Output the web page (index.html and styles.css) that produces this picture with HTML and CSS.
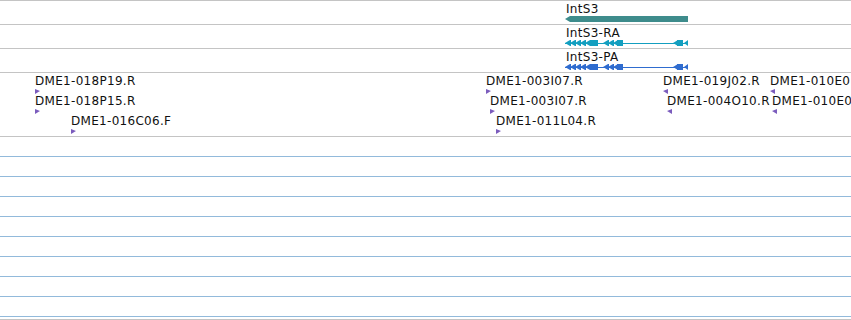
FILE: index.html
```html
<!DOCTYPE html>
<html lang="en">
<head>
	<meta charset="utf-8" />
	<title>Track view</title>
	<link rel="stylesheet" href="styles.css">
</head>
<body>
<div class="view">

	<!-- gene -->
	<div class="track">
		<div class="feature" style="left:565px">
			<div class="label">IntS3</div>
			<svg class="glyph" width="124" height="6">
				<polygon class="gene" points="0,3 5,0 123,0 123,6 5,6" />
			</svg>
		</div>
	</div>

	<!-- transcript RA -->
	<div class="track">
		<div class="feature" style="left:565px">
			<div class="label">IntS3-RA</div>
			<svg class="glyph ra" width="124" height="6">
				<rect x="0" y="2" width="123" height="2" />
				<polygon points="0,3 5,0 6,0 6,6 5,6" />
				<polygon points="5,3 10,0 11,0 11,6 10,6" />
				<polygon points="10,3 15,0 16,0 16,6 15,6" />
				<polygon points="15,3 20,0 21,0 21,6 20,6" />
				<polygon points="20,3 25,0 25,6" />
				<rect x="25" y="0" width="8" height="6" />
				<polygon points="38,3 43,0 44,0 44,6 43,6" />
				<polygon points="43,3 48,0 49,0 49,6 48,6" />
				<polygon points="48,3 53,0 53,6" />
				<rect x="52" y="0" width="6" height="6" />
				<polygon points="108,3 113,0 113,6" />
				<rect x="112" y="0" width="6" height="6" />
				<polygon points="119,3 123,0 123,6" />
			</svg>
		</div>
	</div>

	<!-- transcript PA -->
	<div class="track">
		<div class="feature" style="left:565px">
			<div class="label">IntS3-PA</div>
			<svg class="glyph pa" width="124" height="6">
				<rect x="0" y="2" width="123" height="2" />
				<polygon points="0,3 5,0 6,0 6,6 5,6" />
				<polygon points="5,3 10,0 11,0 11,6 10,6" />
				<polygon points="10,3 15,0 16,0 16,6 15,6" />
				<polygon points="15,3 20,0 21,0 21,6 20,6" />
				<polygon points="20,3 25,0 25,6" />
				<rect x="25" y="0" width="8" height="6" />
				<polygon points="38,3 43,0 44,0 44,6 43,6" />
				<polygon points="43,3 48,0 49,0 49,6 48,6" />
				<polygon points="48,3 53,0 53,6" />
				<rect x="52" y="0" width="6" height="6" />
				<polygon points="108,3 113,0 113,6" />
				<rect x="112" y="0" width="6" height="6" />
				<polygon points="119,3 123,0 123,6" />
			</svg>
		</div>
	</div>

	<!-- clone ends -->
	<div class="track clones">
		<div class="feature" style="left:35px;top:1px">
			<div class="label">DME1-018P19.R</div>
			<svg class="arrow" width="6" height="5"><polygon points="0,0 5,2 0,5" /></svg>
		</div>
		<div class="feature" style="left:486px;top:1px">
			<div class="label">DME1-003I07.R</div>
			<svg class="arrow" width="6" height="5"><polygon points="0,0 5,2 0,5" /></svg>
		</div>
		<div class="feature" style="left:663px;top:1px">
			<div class="label">DME1-019J02.R</div>
			<svg class="arrow" width="6" height="5"><polygon points="5,0 0,2 5,5" /></svg>
		</div>
		<div class="feature" style="left:770px;top:1px">
			<div class="label">DME1-010E0</div>
			<svg class="arrow" width="6" height="5"><polygon points="5,0 0,2 5,5" /></svg>
		</div>

		<div class="feature" style="left:35px;top:21px">
			<div class="label">DME1-018P15.R</div>
			<svg class="arrow" width="6" height="5"><polygon points="0,0 5,2 0,5" /></svg>
		</div>
		<div class="feature" style="left:490px;top:21px">
			<div class="label">DME1-003I07.R</div>
			<svg class="arrow" width="6" height="5"><polygon points="0,0 5,2 0,5" /></svg>
		</div>
		<div class="feature" style="left:667px;top:21px">
			<div class="label">DME1-004O10.R</div>
			<svg class="arrow" width="6" height="5"><polygon points="5,0 0,2 5,5" /></svg>
		</div>
		<div class="feature" style="left:772px;top:21px">
			<div class="label">DME1-010E0</div>
			<svg class="arrow" width="6" height="5"><polygon points="5,0 0,2 5,5" /></svg>
		</div>

		<div class="feature" style="left:71px;top:41px">
			<div class="label">DME1-016C06.F</div>
			<svg class="arrow" width="6" height="5"><polygon points="0,0 5,2 0,5" /></svg>
		</div>
		<div class="feature" style="left:496px;top:41px">
			<div class="label">DME1-011L04.R</div>
			<svg class="arrow" width="6" height="5"><polygon points="0,0 5,2 0,5" /></svg>
		</div>
	</div>

	<!-- empty ruled area -->
	<div class="ruled">
		<div class="row"></div>
		<div class="row"></div>
		<div class="row"></div>
		<div class="row"></div>
		<div class="row"></div>
		<div class="row"></div>
		<div class="row"></div>
		<div class="row"></div>
		<div class="row"></div>
	</div>

</div>
</body>
</html>
```

FILE: styles.css
```css
*{
	font-family: "DejaVu Sans", Verdana, sans-serif;
}

html, body{
	margin: 0;
	padding: 0;
	background: #fff;
}

body{
	width: 851px;
	height: 320px;
	overflow: hidden;
}

.view{
	border-top: 1px solid #c4c4c4;
}

.track{
	position: relative;
	height: 23px;
	border-bottom: 1px solid #c4c4c4;
	overflow: hidden;
}

.track.clones{
	height: 63px;
}

.feature{
	position: absolute;
	top: 1px;
}

.label{
	font-size: 12px;
	line-height: 14px;
	letter-spacing: 0.3px;
	color: #111;
	white-space: nowrap;
}

.track:not(.clones) .label{
	margin-left: 1px;
}

.glyph{
	display: block;
}

.glyph .gene{
	fill: #3e8c8c;
}

.glyph.ra rect, .glyph.ra polygon{
	fill: #139fc0;
}

.glyph.pa rect, .glyph.pa polygon{
	fill: #2f6ccf;
}

.glyph rect:first-child{
	height: 1px;
	y: 3px;
}

.arrow{
	display: block;
	margin-top: 1px;
}

.arrow polygon{
	fill: #7b5cbd;
}

.ruled{
	border-bottom: 1px solid #c4c4c4;
	padding-bottom: 2px;
}

.row{
	height: 19px;
	border-bottom: 1px solid #92badb;
}
```
